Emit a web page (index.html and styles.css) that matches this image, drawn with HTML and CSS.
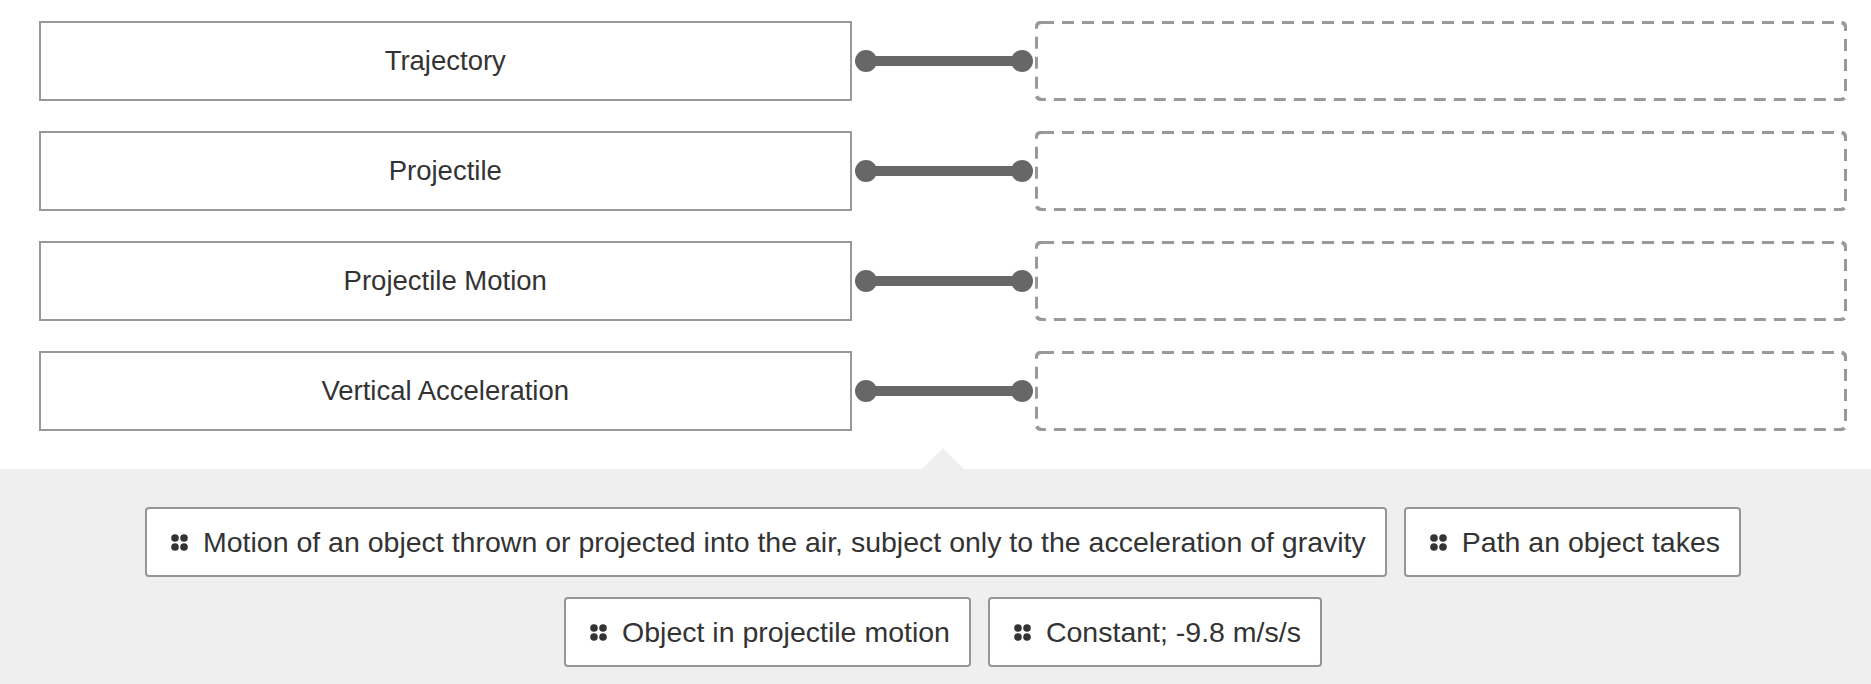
FILE: index.html
```html
<!DOCTYPE html>
<html>
  <head>
    <title>Match the terms</title>
    <link rel="stylesheet" href="styles.css">
  </head>
  <body>
    <div class="matching">
      <div class="pairs">
        <div class="term">Trajectory</div>
        <div class="connector"><span class="dot"></span><span class="line"></span><span class="dot"></span></div>
        <div class="drop-zone"></div>

        <div class="term">Projectile</div>
        <div class="connector"><span class="dot"></span><span class="line"></span><span class="dot"></span></div>
        <div class="drop-zone"></div>

        <div class="term">Projectile Motion</div>
        <div class="connector"><span class="dot"></span><span class="line"></span><span class="dot"></span></div>
        <div class="drop-zone"></div>

        <div class="term">Vertical Acceleration</div>
        <div class="connector"><span class="dot"></span><span class="line"></span><span class="dot"></span></div>
        <div class="drop-zone"></div>
      </div>
    </div>

    <div class="answer-bank">
      <div class="answer-list">
        <div class="answer">
          <svg class="grip" width="17" height="17" viewBox="0 0 17 17"><circle cx="4" cy="4" r="3.8"/><circle cx="13" cy="4" r="3.8"/><circle cx="4" cy="13" r="3.8"/><circle cx="13" cy="13" r="3.8"/></svg>
          <span>Motion of an object thrown or projected into the air, subject only to the acceleration of gravity</span>
        </div>
        <div class="answer">
          <svg class="grip" width="17" height="17" viewBox="0 0 17 17"><circle cx="4" cy="4" r="3.8"/><circle cx="13" cy="4" r="3.8"/><circle cx="4" cy="13" r="3.8"/><circle cx="13" cy="13" r="3.8"/></svg>
          <span>Path an object takes</span>
        </div>
        <div class="answer">
          <svg class="grip" width="17" height="17" viewBox="0 0 17 17"><circle cx="4" cy="4" r="3.8"/><circle cx="13" cy="4" r="3.8"/><circle cx="4" cy="13" r="3.8"/><circle cx="13" cy="13" r="3.8"/></svg>
          <span>Object in projectile motion</span>
        </div>
        <div class="answer">
          <svg class="grip" width="17" height="17" viewBox="0 0 17 17"><circle cx="4" cy="4" r="3.8"/><circle cx="13" cy="4" r="3.8"/><circle cx="4" cy="13" r="3.8"/><circle cx="13" cy="13" r="3.8"/></svg>
          <span>Constant; -9.8 m/s/s</span>
        </div>
      </div>
    </div>
  </body>
</html>
```

FILE: styles.css
```css
body {
  font-family: "Liberation Sans", Arial, sans-serif;
  margin: 0;
  background: white;
  color: #333;
}

.matching {
  padding: 21px 24px 0 39px;
}

.pairs {
  display: grid;
  grid-template-columns: 1fr 183px 1fr;
  row-gap: 30px;
}

.term {
  height: 80px;
  box-sizing: border-box;
  border: 2px solid #999;
  display: flex;
  align-items: center;
  justify-content: center;
  font-size: 27.5px;
  color: #333;
}

.connector {
  display: flex;
  align-items: center;
  padding: 0 2px 0 3px;
}

.dot {
  width: 22px;
  height: 22px;
  border-radius: 50%;
  background: #676767;
  flex-shrink: 0;
}

.line {
  flex-grow: 1;
  height: 10px;
  background: #676767;
  margin: 0 -2px;
}

/* dashed outline drawn as svg so the dashes are long like the original */
.drop-zone {
  height: 80px;
  border-radius: 5px;
  background-image: url("data:image/svg+xml,%3Csvg xmlns='http://www.w3.org/2000/svg' width='100%25' height='100%25'%3E%3Crect width='100%25' height='100%25' rx='7' fill='none' stroke='%23999' stroke-width='6' stroke-dasharray='12 8'/%3E%3C/svg%3E");
}

.answer-bank {
  margin-top: 38px;
  background: #efefef;
  padding: 38px 24px 17px 39px;
}

.answer-list {
  position: relative;
  display: flex;
  flex-wrap: wrap;
  justify-content: center;
  gap: 20px 17px;
}

.answer-list::before {
  content: "";
  position: absolute;
  top: -59px;
  left: 50%;
  margin-left: -21px;
  border: 21px solid transparent;
  border-top: 0;
  border-bottom-color: #efefef;
}

.answer {
  display: flex;
  align-items: center;
  gap: 15px;
  background: white;
  border: 2px solid #959595;
  border-radius: 4px;
  padding: 16px 19px 16px 24px;
  font-size: 28.5px;
  line-height: 34px;
  color: #333;
}

.grip {
  flex-shrink: 0;
  fill: #333;
}
```
